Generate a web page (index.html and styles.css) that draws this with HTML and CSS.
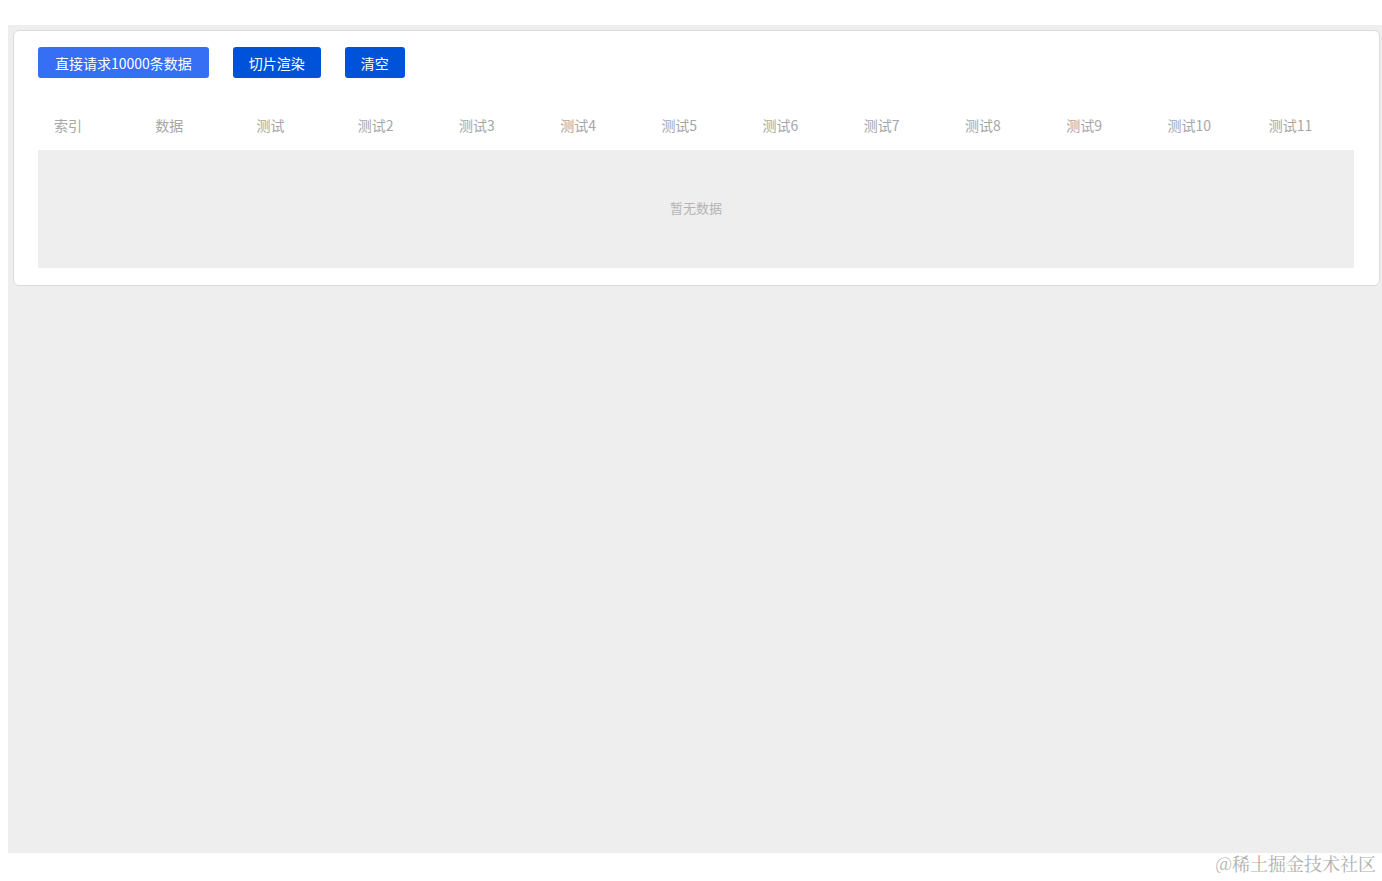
FILE: index.html
```html
<!DOCTYPE html>
<html lang="zh-CN">
<head>
  <meta charset="UTF-8" />
  <meta name="viewport" content="width=device-width, initial-scale=1.0" />
  <title>切片渲染</title>
  <link rel="stylesheet" href="styles.css">
</head>
<body>
  <div class="app">
    <div class="card">
      <div class="toolbar">
        <button class="btn btn-light">直接请求10000条数据</button>
        <button class="btn">切片渲染</button>
        <button class="btn">清空</button>
      </div>

      <div class="table">
        <div class="table-head">
          <div class="th">索引</div>
          <div class="th">数据</div>
          <div class="th">测试</div>
          <div class="th">测试2</div>
          <div class="th">测试3</div>
          <div class="th">测试4</div>
          <div class="th">测试5</div>
          <div class="th">测试6</div>
          <div class="th">测试7</div>
          <div class="th">测试8</div>
          <div class="th">测试9</div>
          <div class="th">测试10</div>
          <div class="th">测试11</div>
        </div>
        <div class="table-empty">暂无数据</div>
      </div>
    </div>
  </div>
  <div class="watermark">@稀土掘金技术社区</div>
</body>
</html>
```

FILE: styles.css
```css
body {
  margin: 0;
  font-family: "Noto Sans CJK SC", "Noto Sans", sans-serif;
  background: white;
}

.app {
  margin: 25px 0 0 8px;
  height: 828px;
  padding: 5px 2px 0 5px;
  box-sizing: border-box;
  background: #eeeeee;
}

.card {
  background: white;
  border: 1px solid #dcdcdc;
  border-radius: 6px;
  padding: 16px 25px 17px 24px;
}

.toolbar {
  display: flex;
  gap: 24px;
}

.btn {
  height: 31px;
  padding: 0 16px;
  border: none;
  border-radius: 3px;
  background: #0052d9;
  color: white;
  font-family: inherit;
  font-size: 14px;
  cursor: pointer;
}

.btn-light {
  padding: 0 17px;
  background: #366ef4;
}

.table {
  margin-top: 24px;
}

.table-head {
  display: grid;
  grid-template-columns: repeat(13, 1fr);
  height: 48px;
  padding-bottom: 3px;
  box-sizing: border-box;
  align-items: center;
}

.th {
  padding-left: 16px;
  font-size: 14px;
  color: #a6a6a6;
}

.table-empty {
  height: 118px;
  padding-bottom: 4px;
  box-sizing: border-box;
  background: #eeeeee;
  display: flex;
  justify-content: center;
  align-items: center;
  font-size: 13px;
  color: #b4b4b4;
}

.watermark {
  text-align: right;
  padding-right: 6px;
  font-family: "Noto Serif CJK SC", "Noto Sans CJK SC", serif;
  font-size: 18px;
  line-height: 20px;
  color: #b0b0b0;
}
```
